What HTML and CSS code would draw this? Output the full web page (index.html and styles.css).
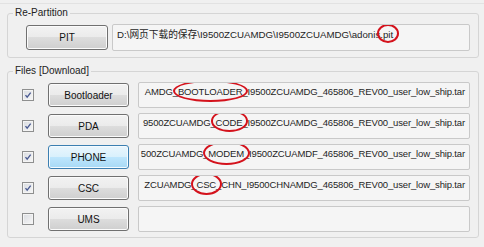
FILE: index.html
```html
<!DOCTYPE html>
<html lang="zh-CN">
<head>
    <meta charset="UTF-8">
    <meta name="viewport" content="width=device-width, initial-scale=1.0">
    <title>Odin - Files</title>
    <link rel="stylesheet" href="styles.css">
</head>
<body>
    <div class="window">
        <fieldset class="group group-pit">
            <legend>Re-Partition</legend>
            <div class="pit-row">
                <button class="btn btn-pit">PIT</button>
                <div class="field field-path">D:\网页下载的保存\I9500ZCUAMDG\I9500ZCUAMDG\adonis.<span class="mark mark-pit">pit</span></div>
            </div>
        </fieldset>

        <fieldset class="group group-files">
            <legend>Files [Download]</legend>
            <div class="file-list">
                <div class="file-row">
                    <span class="check checked"><svg viewBox="0 0 12 12"><path d="M3 6.2 L5 8.6 L9.2 3.2"/></svg></span>
                    <button class="btn">Bootloader</button>
                    <div class="field field-file"><span class="file-name">AMDG_<span class="mark mark-bl">BOOTLOADER</span>_I9500ZCUAMDG_465806_REV00_user_low_ship.tar</span></div>
                </div>
                <div class="file-row">
                    <span class="check checked"><svg viewBox="0 0 12 12"><path d="M3 6.2 L5 8.6 L9.2 3.2"/></svg></span>
                    <button class="btn">PDA</button>
                    <div class="field field-file"><span class="file-name">9500ZCUAMDG_<span class="mark mark-code">CODE</span>_I9500ZCUAMDG_465806_REV00_user_low_ship.tar</span></div>
                </div>
                <div class="file-row">
                    <span class="check checked"><svg viewBox="0 0 12 12"><path d="M3 6.2 L5 8.6 L9.2 3.2"/></svg></span>
                    <button class="btn btn-focus">PHONE</button>
                    <div class="field field-file"><span class="file-name">500ZCUAMDG_<span class="mark mark-modem">MODEM</span>_I9500ZCUAMDF_465806_REV00_user_low_ship.tar</span></div>
                </div>
                <div class="file-row">
                    <span class="check checked"><svg viewBox="0 0 12 12"><path d="M3 6.2 L5 8.6 L9.2 3.2"/></svg></span>
                    <button class="btn">CSC</button>
                    <div class="field field-file"><span class="file-name">ZCUAMDG_<span class="mark mark-csc">CSC</span>_CHN_I9500CHNAMDG_465806_REV00_user_low_ship.tar</span></div>
                </div>
                <div class="file-row">
                    <span class="check"></span>
                    <button class="btn">UMS</button>
                    <div class="field field-file"></div>
                </div>
            </div>
        </fieldset>
    </div>
</body>
</html>
```

FILE: styles.css
```css
* { box-sizing: border-box; }
body {
    margin: 0;
    padding: 0;
    font-family: "Liberation Sans", Arial, "Noto Sans CJK SC", sans-serif;
    font-size: 10px;
    color: #1e1e1e;
    background: #f0f0f0;
}
.window {
    margin-top: 3px;
    border-top: 1px solid #e2e2e2;
    padding-top: 3px;
}
.group {
    margin: 0 5px 0 7px;
    border: 1px solid #d5d5d5;
    border-radius: 3px;
    padding: 5px 8px 6px 5px;
    min-inline-size: 0;
}
.group legend {
    padding: 0 2px;
    line-height: 12px;
    color: #222;
}
.group-files {
    margin-top: 7px;
    padding-bottom: 5px;
}

/* buttons */
.btn {
    font-family: inherit;
    font-size: 10px;
    color: #111;
    height: 25px;
    padding: 0;
    border: 1px solid #707070;
    border-radius: 3px;
    background: linear-gradient(#f2f2f2 0%, #ebebeb 50%, #dddddd 50%, #cfcfcf 100%);
    box-shadow: inset 0 0 0 1px #fbfbfb;
}
.btn-focus {
    border-color: #3c7fb1;
    background: linear-gradient(#eaf6fd 0%, #d9f0fc 50%, #bee6fd 50%, #a7d9f5 100%);
    box-shadow: inset 0 0 0 1px #f4fbff;
}

/* text boxes */
.field {
    border: 1px solid #c9c9c9;
    border-radius: 2px;
    background: #f5f5f5;
    line-height: 12px;
    white-space: nowrap;
    overflow: hidden;
    padding-top: 3px;
}

.pit-row {
    display: flex;
    align-items: center;
    margin-left: 13px;
    height: 27px;
}
.btn-pit { width: 82px; }
.field-path {
    margin-left: 4px;
    flex: 1;
    height: 27px;
    padding-left: 4px;
    padding-top: 4px;
    font-size: 9.7px;
}

.file-list {
    display: flex;
    flex-direction: column;
    gap: 5px;
    margin-left: 9px;
}
.file-row {
    display: flex;
    align-items: center;
    height: 26px;
}
.file-row .btn {
    width: 81px;
    height: 24px;
    margin-left: 14px;
}
.field-file {
    margin-left: 9px;
    flex: 1;
    height: 26px;
    display: flex;
    justify-content: flex-end;
    padding-right: 4px;
    font-size: 9.5px;
    letter-spacing: -0.15px;
}
.file-name { flex-shrink: 0; }

/* check boxes */
.check {
    width: 12px;
    height: 12px;
    border: 1px solid #8e8f8f;
    background: linear-gradient(135deg, #d9dce1, #f7f7f7);
    box-shadow: inset 0 0 0 1px #f4f4f4;
    display: block;
}
.check svg {
    display: block;
    width: 10px;
    height: 10px;
}
.check path {
    fill: none;
    stroke: #4a5a92;
    stroke-width: 1.6;
}

/* red annotation circles */
.mark { position: relative; }
.mark::after {
    content: "";
    position: absolute;
    border: 2px solid #d4121c;
    border-radius: 50%;
    top: -6px;
    bottom: -5px;
    left: -5px;
    right: -6px;
}
.mark-pit::after { top: -5px; bottom: -3px; left: -6px; right: -6px; }
.mark-code::after { top: -7px; bottom: -4px; }
.mark-modem::after { top: -7px; bottom: -6px; }
```
